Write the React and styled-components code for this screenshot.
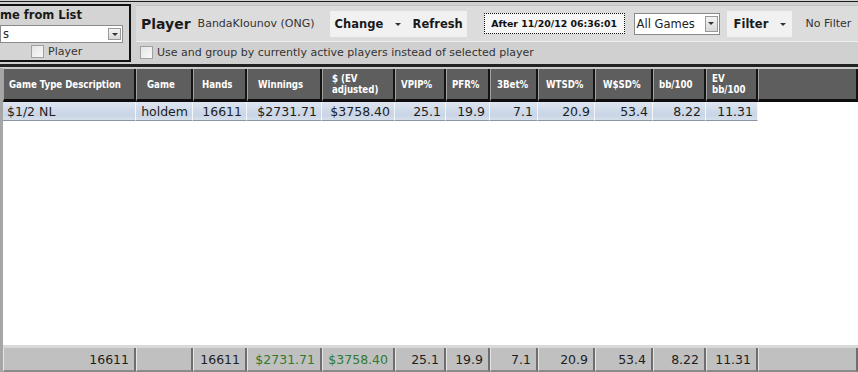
import React from "react";
import styled, { createGlobalStyle } from "styled-components";

const Global = createGlobalStyle`
  html, body { margin: 0; padding: 0; background: #d2d2d2; }
  body { font-family: "DejaVu Sans", Verdana, sans-serif; }
  #root { width: 858px; height: 372px; overflow: hidden; }
`;

const Page = styled.div`
  width: 858px;
  height: 372px;
  display: flex;
  flex-direction: column;
  background: #d2d2d2;
  overflow: hidden;
`;

const TopArea = styled.div`
  height: 62px;
  margin-top: 1px;
  border-top: 1px solid #1c1c1c;
  display: flex;
  align-items: flex-start;
  background: #d0d0d0;
`;

const LeftPanel = styled.div`
  width: 129px;
  height: 54px;
  margin-top: 2px;
  border: 2px solid #111;
  border-left: none;
  background: #d4d4d4;
  display: flex;
  flex-direction: column;
`;

const PanelTitle = styled.div`
  font-weight: bold;
  font-size: 11.5px;
  color: #1a1a1a;
  height: 16px;
  line-height: 16px;
  padding-top: 1px;
  white-space: nowrap;
`;

const Select = styled.div`
  width: ${(p) => p.$w}px;
  height: ${(p) => p.$h}px;
  box-sizing: border-box;
  border: 1px solid #8a8a8a;
  background: #fff;
  display: flex;
  align-items: center;
  font-size: 11.5px;
  color: #222;
  padding-left: 2px;
`;

const SelectText = styled.span`
  flex: 1;
  white-space: nowrap;
`;

const ArrowBtn = styled.div`
  width: 13px;
  height: calc(100% - 4px);
  margin-right: 1px;
  box-sizing: border-box;
  border: 1px solid #999;
  background: linear-gradient(#f4f4f4, #d8d8d8);
  display: flex;
  align-items: center;
  justify-content: center;
  &::after {
    content: "";
    border-left: 3px solid transparent;
    border-right: 3px solid transparent;
    border-top: 3px solid #333;
  }
`;

const CheckRow = styled.label`
  display: flex;
  align-items: center;
  gap: 4px;
  font-size: 11px;
  color: #333;
  height: ${(p) => p.$h}px;
  padding-left: ${(p) => p.$pl || 0}px;
  white-space: nowrap;
`;

const Box = styled.span`
  width: 11px;
  height: 11px;
  border: 1px solid #a0a0a0;
  background: linear-gradient(135deg, #e4e4e4, #fafafa);
  display: inline-block;
`;

const RightPanel = styled.div`
  flex: 1;
  margin-left: 5px;
  margin-top: 3px;
  display: flex;
  flex-direction: column;
`;

const Toolbar = styled.div`
  height: 35px;
  background: #dcdcdc;
  border-top: 1px solid #c4c4c4;
  display: flex;
  align-items: center;
  padding-left: 5px;
`;

const PlayerLabel = styled.span`
  font-weight: bold;
  font-size: 14px;
  color: #1c1c1c;
  margin-right: 7px;
`;

const PlayerName = styled.span`
  font-size: 11px;
  color: #333;
  width: 132px;
  white-space: nowrap;
`;

const BtnGroup = styled.div`
  display: flex;
  height: 26px;
  background: #f1f1f1;
  margin-right: ${(p) => p.$mr || 0}px;
  margin-left: ${(p) => p.$ml || 0}px;
`;

const Btn = styled.div`
  display: flex;
  align-items: center;
  font-weight: bold;
  font-size: 11.5px;
  color: #1a1a1a;
  width: ${(p) => p.$w}px;
  padding-left: ${(p) => p.$pl}px;
  box-sizing: border-box;
  gap: 12px;
  white-space: nowrap;
`;

const Caret = styled.span`
  border-left: 3px solid transparent;
  border-right: 3px solid transparent;
  border-top: 3px solid #333;
  margin-top: 2px;
`;

const DateBox = styled.div`
  height: 21px;
  width: 141px;
  box-sizing: border-box;
  border: 1px dotted #111;
  background: #f6f6f6;
  display: flex;
  align-items: center;
  justify-content: center;
  font-weight: bold;
  font-size: 9.4px;
  color: #111;
  margin-right: 9px;
  white-space: nowrap;
`;

const NoFilter = styled.span`
  font-size: 11px;
  color: #333;
  margin-left: 14px;
  white-space: nowrap;
`;

const OptionRow = styled.div`
  height: 20px;
  background: #d0d0d0;
  border-top: 1px solid #eeeeee;
  display: flex;
  align-items: center;
`;

const Rule = styled.div`
  height: 3px;
  background: #222;
  border-bottom: 1px solid #cfcfcf;
`;

const Grid = styled.div`
  flex: 1;
  display: flex;
  flex-direction: column;
  border-left: 3px solid #a6a6a6;
  background: #fff;
`;

const HeaderRow = styled.div`
  display: flex;
  height: 33px;
  border-top: 1px solid #c8c8c8;
  background: #5e5e5e;
`;

const HeadCell = styled.div`
  width: ${(p) => p.$w}px;
  flex: ${(p) => (p.$fill ? 1 : "none")};
  box-sizing: border-box;
  border-left: 1px solid #a2a2a2;
  border-right: 2px solid #141414;
  border-bottom: 3px solid #0e0e0e;
  background: #5e5e5e;
  color: #fff;
  font-family: "DejaVu Sans Condensed", "DejaVu Sans", sans-serif;
  font-stretch: semi-condensed;
  font-weight: bold;
  font-size: 9.6px;
  line-height: 11px;
  display: flex;
  align-items: center;
  padding-left: ${(p) => p.$pl ?? 7}px;
  white-space: pre;
`;

const DataRow = styled.div`
  display: flex;
  height: 19px;
`;

const DataCell = styled.div`
  width: ${(p) => p.$w}px;
  box-sizing: border-box;
  background: linear-gradient(#dde5f0, #c9d5e6 70%, #d6dfeb);
  border-right: 1px solid #f4f6fa;
  border-bottom: 1px solid #8a94a4;
  font-size: 12.5px;
  color: #1e1e1e;
  display: flex;
  align-items: center;
  justify-content: ${(p) => (p.$left ? "flex-start" : "flex-end")};
  padding: 0 4px 0 4px;
  white-space: nowrap;
`;

const Empty = styled.div`
  flex: 1;
  background: #fff;
`;

const FooterRow = styled.div`
  display: flex;
  height: 24px;
  border-top: 3px solid #d8d8d8;
  background: #bfbfbf;
`;

const FootCell = styled.div`
  width: ${(p) => p.$w}px;
  flex: ${(p) => (p.$fill ? 1 : "none")};
  box-sizing: border-box;
  background: #c0c0c0;
  border-left: 1px solid #e6e6e6;
  border-right: 2px solid #6e6e6e;
  border-bottom: 2px solid #8a8a8a;
  font-size: 12.5px;
  color: ${(p) => (p.$green ? "#2f7a2f" : "#1e1e1e")};
  display: flex;
  align-items: center;
  justify-content: flex-end;
  padding-right: 5px;
  white-space: nowrap;
`;

const cols = [
  { h: "Game Type Description", w: 133, d: "$1/2 NL", left: true, f: "16611", pl: 5 },
  { h: "Game", w: 57, d: "holdem", f: "", pl: 10 },
  { h: "Hands", w: 54, d: "16611", f: "16611", pl: 8 },
  { h: "Winnings", w: 75, d: "$2731.71", f: "$2731.71", g: true, pl: 10 },
  { h: "$ (EV\nadjusted)", w: 73, d: "$3758.40", f: "$3758.40", g: true, pl: 9 },
  { h: "VPIP%", w: 51, d: "25.1", f: "25.1", pl: 5 },
  { h: "PFR%", w: 44, d: "19.9", f: "19.9", pl: 5 },
  { h: "3Bet%", w: 48, d: "7.1", f: "7.1", pl: 6 },
  { h: "WTSD%", w: 57, d: "20.9", f: "20.9", pl: 7 },
  { h: "W$SD%", w: 58, d: "53.4", f: "53.4", pl: 7 },
  { h: "bb/100", w: 53, d: "8.22", f: "8.22", pl: 5 },
  { h: "EV\nbb/100", w: 52, d: "11.31", f: "11.31", pl: 5 },
];

export default function App() {
  return (
    <Page>
      <Global />
      <TopArea>
        <LeftPanel>
          <PanelTitle>me from List</PanelTitle>
          <Select $w={123} $h={18} style={{ marginTop: 2 }}>
            <SelectText>s</SelectText>
            <ArrowBtn />
          </Select>
          <CheckRow $h={17} $pl={31}>
            <Box />
            Player
          </CheckRow>
        </LeftPanel>
        <RightPanel>
          <Toolbar>
            <PlayerLabel>Player</PlayerLabel>
            <PlayerName>BandaKIounov (ONG)</PlayerName>
            <BtnGroup $mr={17}>
              <Btn $w={77} $pl={5}>
                Change <Caret />
              </Btn>
              <Btn $w={60} $pl={6}>Refresh</Btn>
            </BtnGroup>
            <DateBox>After 11/20/12 06:36:01</DateBox>
            <Select $w={86} $h={22}>
              <SelectText>All Games</SelectText>
              <ArrowBtn />
            </Select>
            <BtnGroup $ml={7}>
              <Btn $w={65} $pl={7}>
                Filter <Caret />
              </Btn>
            </BtnGroup>
            <NoFilter>No Filter</NoFilter>
          </Toolbar>
          <OptionRow>
            <CheckRow $h={20} $pl={4}>
              <Box />
              Use and group by currently active players instead of selected player
            </CheckRow>
          </OptionRow>
        </RightPanel>
      </TopArea>
      <Rule />
      <Grid>
        <HeaderRow>
          {cols.map((c) => (
            <HeadCell key={c.h} $w={c.w} $pl={c.pl}>
              {c.h}
            </HeadCell>
          ))}
          <HeadCell $fill />
        </HeaderRow>
        <DataRow>
          {cols.map((c) => (
            <DataCell key={c.h} $w={c.w} $left={c.left}>
              {c.d}
            </DataCell>
          ))}
        </DataRow>
        <Empty />
        <FooterRow>
          {cols.map((c) => (
            <FootCell key={c.h} $w={c.w} $green={c.g}>
              {c.f}
            </FootCell>
          ))}
          <FootCell $fill />
        </FooterRow>
      </Grid>
    </Page>
  );
}
